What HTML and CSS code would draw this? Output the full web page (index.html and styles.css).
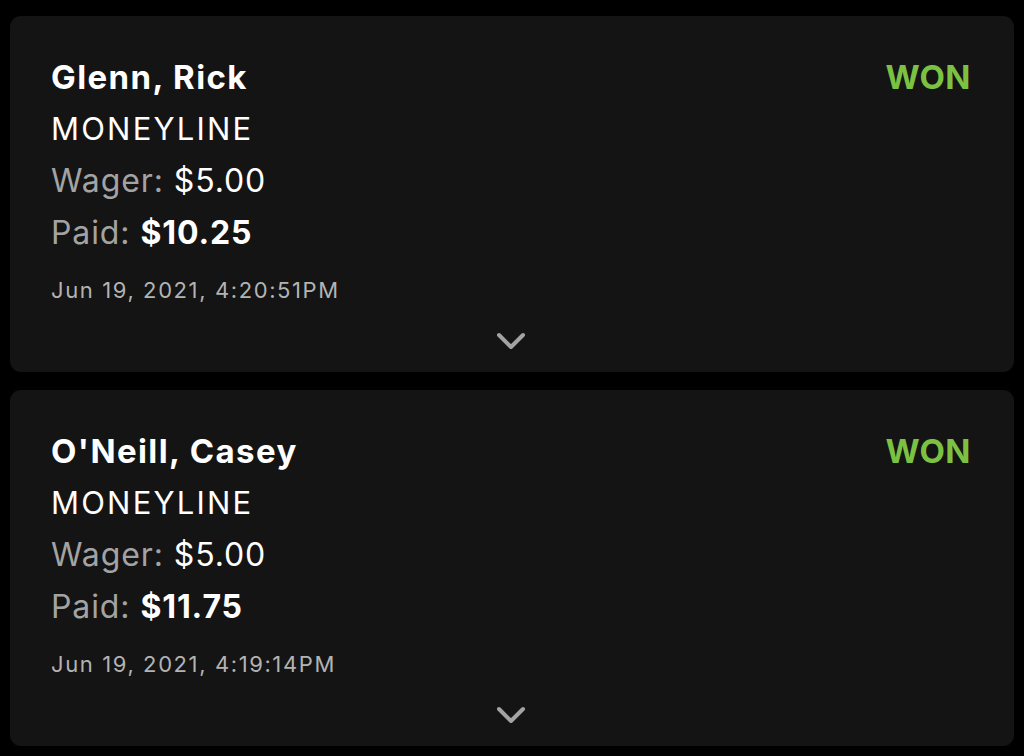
FILE: index.html
```html
<!DOCTYPE html>
<html>
<head>
<meta charset="utf-8">
<link rel="stylesheet" href="styles.css">
</head>
<body>
<div class="list">
  <div class="card">
    <div class="head">
      <div class="name">Glenn, Rick</div>
      <div class="status">WON</div>
    </div>
    <div class="type">MONEYLINE</div>
    <div class="row"><span class="label">Wager:</span> <span class="val">$5.00</span></div>
    <div class="row"><span class="label">Paid:</span> <span class="val bold">$10.25</span></div>
    <div class="date">Jun 19, 2021, 4:20:51PM</div>
    <div class="toggle">
      <svg width="32" height="22" viewBox="0 0 32 22"><path d="M4 5 L16 17 L28 5" fill="none" stroke="#a3a3a3" stroke-width="4" stroke-linecap="round" stroke-linejoin="round"/></svg>
    </div>
  </div>
  <div class="card">
    <div class="head">
      <div class="name">O'Neill, Casey</div>
      <div class="status">WON</div>
    </div>
    <div class="type">MONEYLINE</div>
    <div class="row"><span class="label">Wager:</span> <span class="val">$5.00</span></div>
    <div class="row"><span class="label">Paid:</span> <span class="val bold">$11.75</span></div>
    <div class="date">Jun 19, 2021, 4:19:14PM</div>
    <div class="toggle">
      <svg width="32" height="22" viewBox="0 0 32 22"><path d="M4 5 L16 17 L28 5" fill="none" stroke="#a3a3a3" stroke-width="4" stroke-linecap="round" stroke-linejoin="round"/></svg>
    </div>
  </div>
</div>
</body>
</html>
```
FILE: styles.css
```css
html, body {
  margin: 0;
  padding: 0;
  background: #000;
}
body {
  font-family: Inter, "Liberation Sans", Arial, sans-serif;
  color: #fff;
  width: 1024px;
  height: 756px;
  overflow: hidden;
}
.list {
  display: flex;
  flex-direction: column;
  gap: 18px;
  padding: 16px 10px 0 10px;
}
.card {
  background: #141414;
  border-radius: 11px;
  padding: 35px 43px 20px 41px;
  display: flex;
  flex-direction: column;
}
.head {
  display: flex;
  justify-content: space-between;
  align-items: baseline;
  height: 52px;
  line-height: 52px;
}
.name {
  font-size: 33px;
  font-weight: bold;
  letter-spacing: 1.4px;
}
.status {
  font-size: 33px;
  font-weight: bold;
  color: #7cc242;
  letter-spacing: 0.5px;
}
.type {
  font-size: 31px;
  line-height: 52px;
  letter-spacing: 2.2px;
}
.row {
  font-size: 32px;
  line-height: 52px;
  letter-spacing: 0.9px;
}
.label {
  color: #a3a3a3;
}
.val.bold {
  font-weight: bold;
}
.date {
  margin-top: 11px;
  font-size: 22px;
  line-height: 40px;
  letter-spacing: 1.6px;
  color: #b3b3b3;
}
.toggle {
  margin-top: 20px;
  display: flex;
  justify-content: center;
  height: 22px;
}
.toggle svg {
  display: block;
}
```
